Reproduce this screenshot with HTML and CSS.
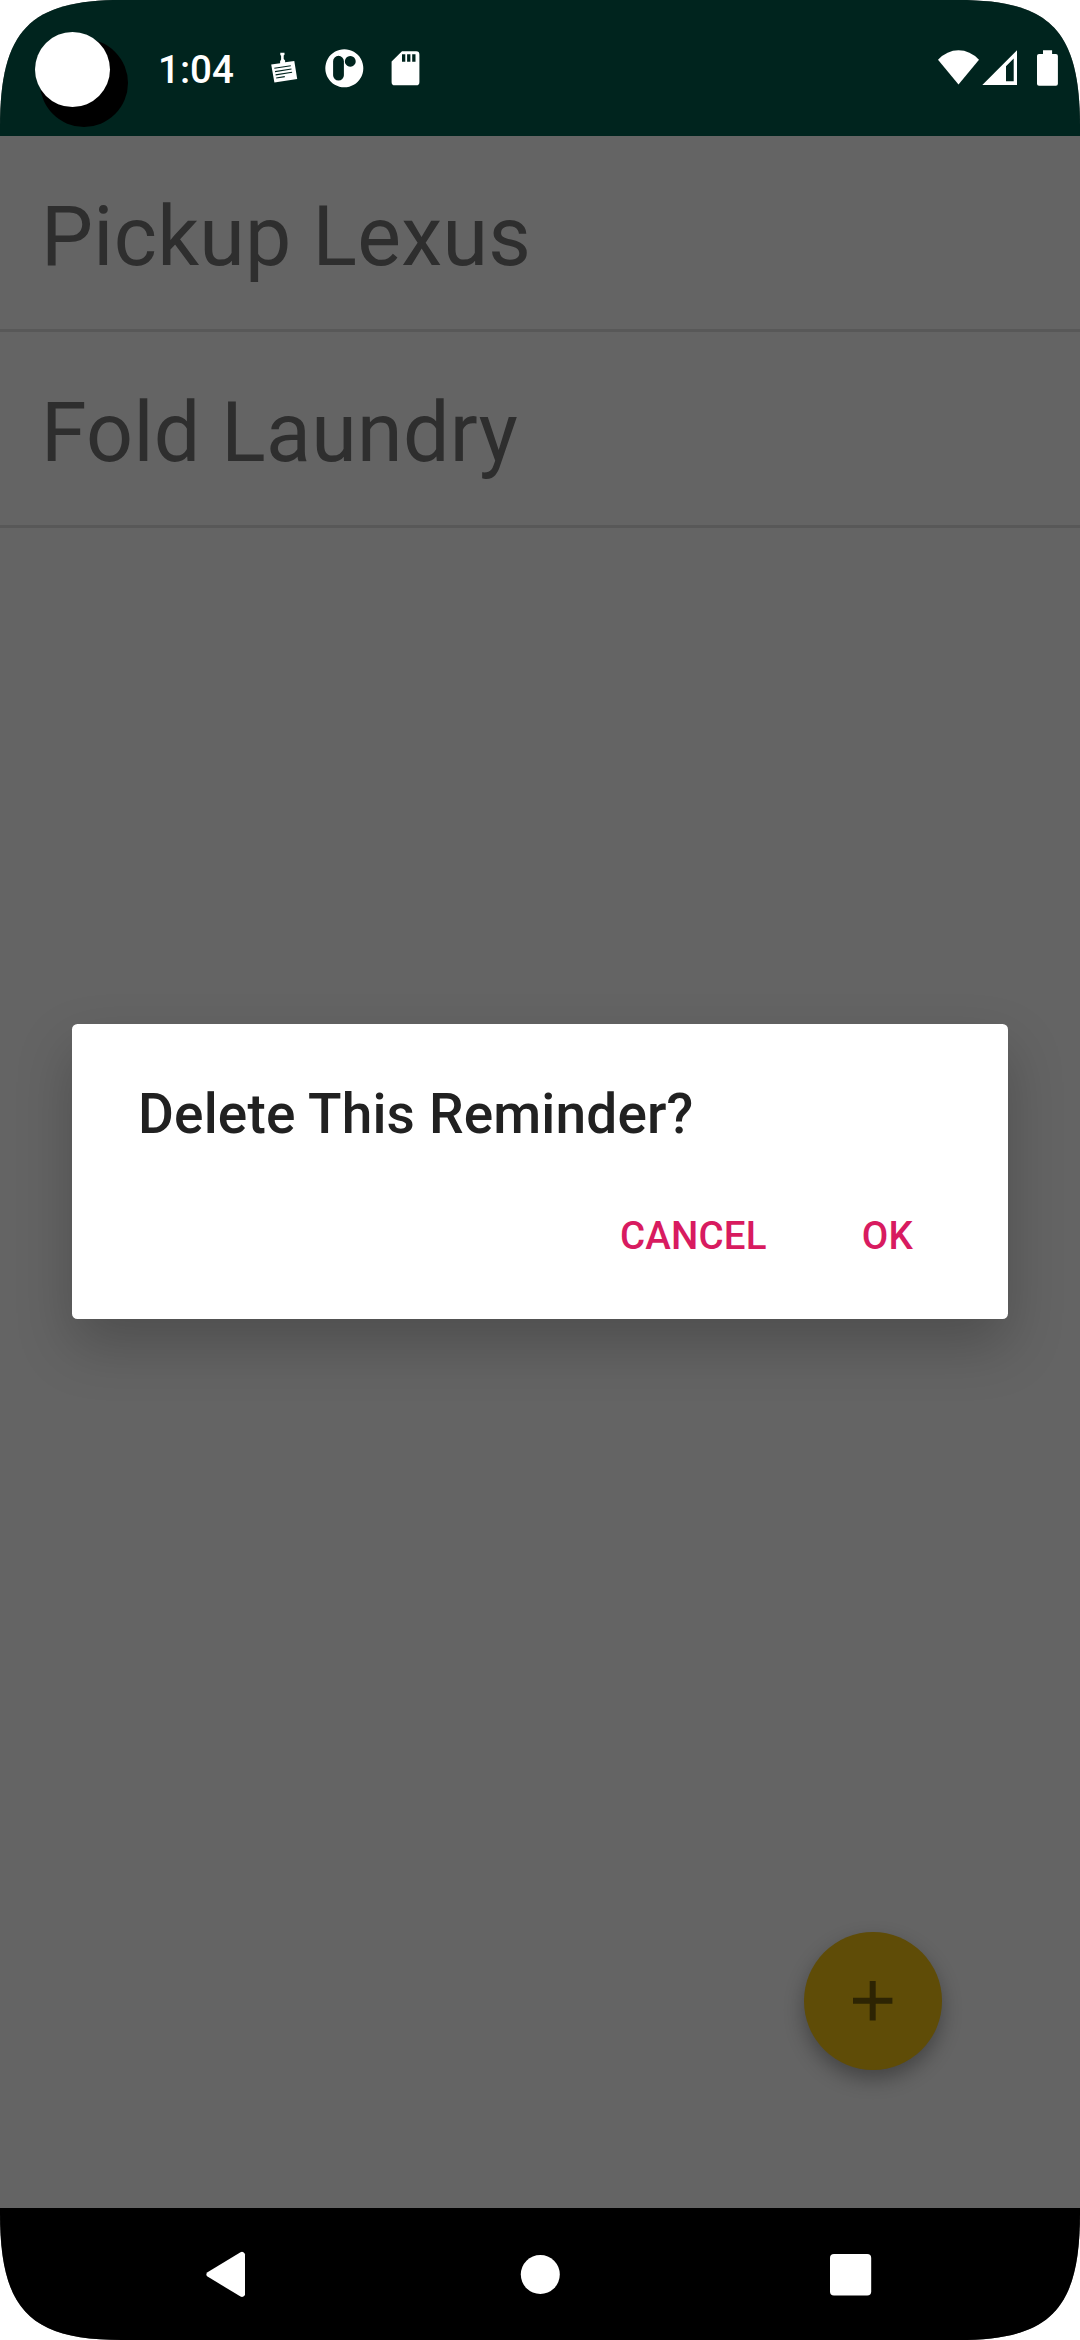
FILE: index.html
```html
<!DOCTYPE html>
<html lang="en">
<head>
<meta charset="utf-8">
<title>Reminders</title>
<link rel="stylesheet" href="styles.css">
</head>
<body>
<div class="screen">
  <header class="status-bar">
    <svg class="camera" viewBox="0 0 94 96"><circle cx="49" cy="51" r="44" fill="#000"/><circle cx="37.5" cy="37.5" r="37.5" fill="#fff"/></svg>
    <span class="clock">1:04</span>
    <svg class="icon note" viewBox="270 50 30 36"><path d="M280.3 52.7h4.2v2l-.8.7v3.6l1.4 1.4v1.8l9.2-1.2 2.9 17.9-22.8 3.7-3.2-18 8.9-1.4v-2l1-1.8v-3.7l-.8-.8z"/><path class="note-lines" d="M274.3 68.3l16.5-2.6M275 71.6l16.5-2.6M275.6 74.9l16.5-2.6M276.2 78l8.6-1.4"/></svg>
    <svg class="icon app" viewBox="325 49 39 39"><path fill-rule="evenodd" d="M344.3 49.3a19 19 0 1 0 .02 0zM338.5 55.8a5.4 5.4 0 0 1 5.4 5.4v14a5.4 5.4 0 0 1-10.8 0v-14a5.4 5.4 0 0 1 5.4-5.4zM350.3 56a5.4 5.4 0 1 1-.02 0z"/></svg>
    <svg class="icon card" viewBox="391 51 29 35"><path fill-rule="evenodd" d="M402 51.3h14a3.3 3.3 0 0 1 3.4 3.4v27.2a3.3 3.3 0 0 1-3.4 3.4h-21a3.3 3.3 0 0 1-3.4-3.4v-20.4zM402 54.2v7.6h3.3v-7.6zM407.1 54.2v7.6h3.3v-7.6zM412.2 54.2v7.6h3.3v-7.6z"/></svg>
    <div class="system-icons">
      <svg class="icon wifi" viewBox="938 50 41 35"><path d="M938 59.8Q947 50.3 958.5 50.3T979 59.8L958.5 84.4z"/></svg>
      <svg class="icon signal" viewBox="982 50 35 35"><path fill-rule="evenodd" d="M982.3 84.9L1017 50.3v34.6zM1013.7 58.6L1006 66.2v15h7.7z"/></svg>
      <svg class="icon battery" viewBox="1037 50 21 36"><path d="M1043 50.3h9.1v3.6h3.6a2.1 2.1 0 0 1 2.2 2.2v27.5a2.1 2.1 0 0 1-2.2 2.2h-16.5a2.1 2.1 0 0 1-2.2-2.2v-27.5a2.1 2.1 0 0 1 2.2-2.2h3.8z"/></svg>
    </div>
  </header>
  <main class="content">
    <ul class="reminders">
      <li class="reminder">Pickup Lexus</li>
      <li class="reminder">Fold Laundry</li>
    </ul>
    <section class="dialog">
      <h1 class="dialog-title">Delete This Reminder?</h1>
      <div class="dialog-actions">
        <button class="action">CANCEL</button>
        <button class="action">OK</button>
      </div>
    </section>
    <button class="fab"><svg class="plus" viewBox="0 0 39.4 39.4"><path d="M16.7 0h6v16.7h16.7v6H22.7v16.7h-6V22.7H0v-6h16.7z"/></svg></button>
  </main>
  <nav class="nav-bar">
    <svg class="nav-icon" viewBox="0 0 48 48"><path d="M40.5 2.3A3 3 0 0 1 45 4.6v39.6a3 3 0 0 1-4.5 2.3L7.5 26.6a2.7 2.7 0 0 1 0-4.4z"/></svg>
    <svg class="nav-icon home" viewBox="0 0 48 48"><circle cx="24.3" cy="24.5" r="19.5"/></svg>
    <svg class="nav-icon" viewBox="0 0 48 48"><rect x="4" y="4" width="41.2" height="41.4" rx="4"/></svg>
  </nav>
</div>
</body>
</html>
```
FILE: styles.css
```css
* { box-sizing: border-box; }
body { margin: 0; background: #fff; font-family: Roboto, sans-serif; }
button { border: 0; padding: 0; background: none; font-family: inherit; }
svg { display: block; flex: none; }

.screen {
  width: 1080px;
  height: 2340px;
  display: flex;
  flex-direction: column;
  background: #646464;
  clip-path: path("M0 127C0 30 30 0 122 0H958C1050 0 1080 30 1080 127V2213C1080 2310 1050 2340 958 2340H122C30 2340 0 2310 0 2213z");
}

.status-bar {
  height: 136px;
  flex: none;
  display: flex;
  align-items: flex-start;
  padding: 32px 22px 0 35px;
  background: #00241e;
}
.camera { width: 94px; height: 96px; }
.clock {
  width: 75px;
  margin: 15px 0 0 29px;
  color: #fff;
  font-size: 38.5px;
  font-weight: 500;
  line-height: 46px;
}
.icon { fill: #fff; }
.note { width: 30px; height: 36px; margin: 18px 0 0 37px; }
.note-lines { fill: none; stroke: #00241e; stroke-width: 1.1; }
.app { width: 39px; height: 39px; margin: 17px 0 0 25px; }
.card { width: 29px; height: 35px; margin: 19px 0 0 27px; }
.system-icons { display: flex; margin: 18px 0 0 auto; }
.wifi { width: 41px; height: 35px; }
.signal { width: 35px; height: 35px; margin-left: 3px; }
.battery { width: 21px; height: 36px; margin-left: 20px; }

.content { position: relative; flex: 1; }
.reminders { margin: 0; padding: 0; list-style: none; }
.reminder {
  height: 196px;
  padding: 0 41px;
  border-bottom: 3px solid #585858;
  color: #2e2e2e;
  font-size: 82.5px;
  line-height: 202px;
  letter-spacing: .3px;
}

.dialog {
  position: absolute;
  top: 888px;
  left: 72px;
  width: 936px;
  height: 295px;
  padding: 58px 88px 0 66px;
  border-radius: 5.5px;
  background: #fff;
  box-shadow: 0 26px 56px rgba(0, 0, 0, .22);
}
.dialog-title {
  margin: 0;
  color: #212121;
  font-size: 55px;
  font-weight: 500;
  line-height: 64px;
  letter-spacing: .15px;
}
.dialog-actions { display: flex; justify-content: flex-end; gap: 95px; margin-top: 67px; padding-right: 7px; }
.action { color: #d81b60; font-size: 38.5px; font-weight: 500; line-height: 45px; letter-spacing: .2px; }

.fab {
  position: absolute;
  top: 1796px;
  left: 804px;
  width: 138px;
  height: 138px;
  display: grid;
  place-items: center;
  border-radius: 50%;
  background: #5f4c07;
  box-shadow: 0 9px 20px rgba(0, 0, 0, .32);
}
.plus { width: 39.4px; height: 39.4px; fill: #2d2403; }

.nav-bar {
  height: 132px;
  flex: none;
  display: flex;
  justify-content: space-between;
  align-items: center;
  padding: 0 206px 0 200px;
  background: #000;
}
.nav-icon { width: 48px; height: 48px; fill: #fff; }
.home { margin-left: 6px; }
```
